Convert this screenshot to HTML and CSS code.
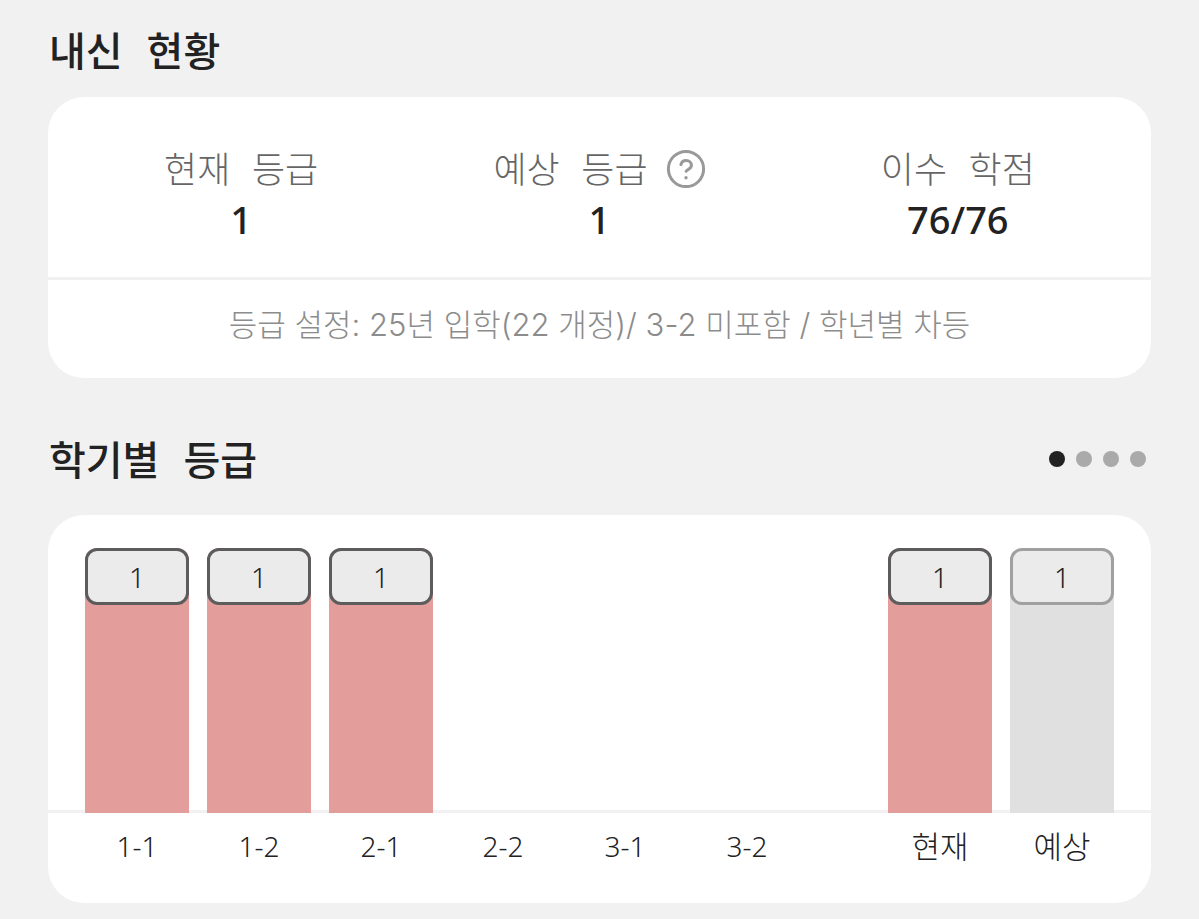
FILE: index.html
```html
<!DOCTYPE html>
<html lang="ko">
<head>
<meta charset="utf-8">
<meta name="viewport" content="width=device-width, initial-scale=1">
<title>내신 현황</title>
<link rel="stylesheet" href="styles.css">
</head>
<body>
<main class="page">
  <section>
    <h2 class="title">내신 현황</h2>
    <div class="card summary">
      <dl class="stats">
        <div class="stat"><dt>현재 등급</dt><dd>1</dd></div>
        <div class="stat"><dt>예상 등급
          <button class="help" type="button" aria-label="도움말"><svg viewBox="0 0 40 40" fill="none" stroke="currentColor" stroke-width="3" stroke-linecap="round" stroke-linejoin="round"><circle cx="20" cy="20" r="17.6"/><path d="M14.9 15.6c.6-2.6 2.6-4.1 5.2-4.1 3 0 5.3 2 5.3 4.7 0 3.3-3.3 3.9-5.3 6"/><circle cx="20" cy="28.8" r="1.7" fill="currentColor" stroke="none"/></svg></button></dt><dd>1</dd></div>
        <div class="stat"><dt>이수 학점</dt><dd>76/76</dd></div>
      </dl>
      <p class="setting">등급 설정: 25년 입학(22 개정)/ 3-2 미포함 / 학년별 차등</p>
    </div>
  </section>
  <section>
    <header class="head">
      <h2 class="title">학기별 등급</h2>
      <nav class="dots" aria-label="페이지">
        <button class="dot on" type="button" aria-label="1"></button>
        <button class="dot" type="button" aria-label="2"></button>
        <button class="dot" type="button" aria-label="3"></button>
        <button class="dot" type="button" aria-label="4"></button>
      </nav>
    </header>
    <div class="card chart">
      <div class="bars">
        <div class="bar"><span>1</span></div>
        <div class="bar"><span>1</span></div>
        <div class="bar"><span>1</span></div>
        <div class="bar total"><span>1</span></div>
        <div class="bar expected"><span>1</span></div>
      </div>
      <div class="labels">
        <span>1-1</span><span>1-2</span><span>2-1</span><span>2-2</span><span>3-1</span><span>3-2</span>
        <span class="total">현재</span><span class="expected">예상</span>
      </div>
    </div>
  </section>
</main>
</body>
</html>
```
FILE: styles.css
```css
* { box-sizing: border-box; }
body {
  margin: 0;
  background: #f1f1f1;
  color: #222;
  font-family: "Noto Sans", "Noto Sans CJK KR", sans-serif;
}
.page { padding: 22px 48px 16px; }
.title { margin: 0; padding: 6px 0 0 1px; font: 500 40px/56px "Liberation Mono", "Noto Sans CJK KR", sans-serif; }
.card { background: #fff; border-radius: 36px; }
.summary { margin-top: 13px; }
.stats {
  display: grid;
  grid-template-columns: repeat(3, 1fr);
  margin: 0;
  padding: 53px 14px 37px;
  border-bottom: 3px solid #f1f1f1;
}
.stat { text-align: center; }
.stat dt {
  display: flex;
  align-items: center;
  justify-content: center;
  gap: 18px;
  height: 48px;
  color: #666;
  font: 300 36px/48px "Liberation Mono", "Noto Sans CJK KR", sans-serif;
}
.stat dd { margin: 0; font-size: 38px; font-weight: 500; line-height: 42px; }
.help { width: 40px; height: 40px; margin-bottom: 10px; padding: 0; border: 0; background: none; color: #999; }
.help svg { display: block; }
.setting {
  margin: 0;
  padding: 22px 0 31px;
  text-align: center;
  color: #8c8c8c;
  font: 300 31px/45px Inter, "Noto Sans CJK KR", sans-serif;
}
.head { display: flex; align-items: flex-end; justify-content: space-between; padding: 53px 5px 0 0; }
.dots { display: flex; gap: 11px; padding-bottom: 26px; }
.dot { width: 16px; height: 16px; padding: 0; border: 0; border-radius: 50%; background: #aaa; }
.dot.on { background: #222; }
.chart { margin-top: 22px; padding: 33px 0 35px; }
.bars, .labels {
  display: grid;
  grid-template-columns: repeat(6, 104fr) 53fr repeat(2, 104fr);
  column-gap: 18px;
  padding: 0 37px;
}
.bars { border-bottom: 3px solid #f1f1f1; }
.bar { height: 265px; margin-bottom: -3px; background: #e39d9b; border-radius: 12px 12px 0 0; }
.bar span {
  display: block;
  height: 57px;
  border: 3px solid #5c5c5c;
  border-radius: 12px;
  background: #ebebeb;
  text-align: center;
  font-size: 28px;
  font-weight: 300;
  line-height: 53px;
}
.bar.expected { background: #e0e0e0; }
.bar.expected span { border-color: #a0a0a0; }
.total { grid-column: 8; }
.expected { grid-column: 9; }
.labels { padding-top: 11px; text-align: center; font-weight: 300; font-size: 28px; line-height: 44px; }
.labels .total, .labels .expected { font-size: 31px; }
```
